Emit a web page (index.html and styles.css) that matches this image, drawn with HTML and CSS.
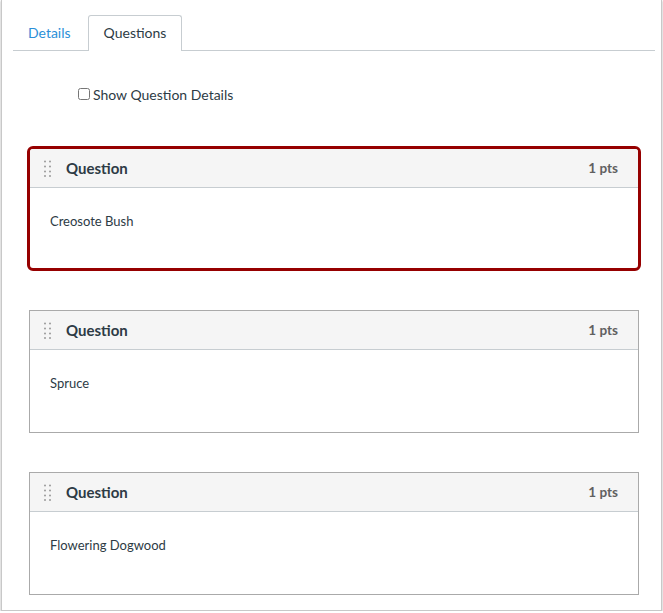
FILE: index.html
```
<!DOCTYPE html>
<html lang="en">
<head>
    <meta charset="UTF-8">
    <meta name="viewport" content="width=device-width, initial-scale=1.0">
    <title>Quiz Questions</title>
    <link rel="stylesheet" href="styles.css">
</head>
<body>
    <div class="frame">
        <div class="tabs">
            <a class="tab" href="#">Details</a>
            <a class="tab active" href="#">Questions</a>
        </div>

        <label class="show-details">
            <input type="checkbox" id="show-details">
            Show Question Details
        </label>

        <div class="questions">
            <div class="question selected">
                <div class="question-header">
                    <svg class="handle" width="8" height="17" viewBox="0 0 8 17">
                        <circle cx="1" cy="1.5" r="1"/><circle cx="6" cy="1.5" r="1"/>
                        <circle cx="1" cy="6.5" r="1"/><circle cx="6" cy="6.5" r="1"/>
                        <circle cx="1" cy="11.5" r="1"/><circle cx="6" cy="11.5" r="1"/>
                        <circle cx="1" cy="16" r="1"/><circle cx="6" cy="16" r="1"/>
                    </svg>
                    <span class="question-title">Question</span>
                    <span class="points">1 pts</span>
                </div>
                <div class="question-body">Creosote Bush</div>
            </div>

            <div class="question">
                <div class="question-header">
                    <svg class="handle" width="8" height="17" viewBox="0 0 8 17">
                        <circle cx="1" cy="1.5" r="1"/><circle cx="6" cy="1.5" r="1"/>
                        <circle cx="1" cy="6.5" r="1"/><circle cx="6" cy="6.5" r="1"/>
                        <circle cx="1" cy="11.5" r="1"/><circle cx="6" cy="11.5" r="1"/>
                        <circle cx="1" cy="16" r="1"/><circle cx="6" cy="16" r="1"/>
                    </svg>
                    <span class="question-title">Question</span>
                    <span class="points">1 pts</span>
                </div>
                <div class="question-body">Spruce</div>
            </div>

            <div class="question">
                <div class="question-header">
                    <svg class="handle" width="8" height="17" viewBox="0 0 8 17">
                        <circle cx="1" cy="1.5" r="1"/><circle cx="6" cy="1.5" r="1"/>
                        <circle cx="1" cy="6.5" r="1"/><circle cx="6" cy="6.5" r="1"/>
                        <circle cx="1" cy="11.5" r="1"/><circle cx="6" cy="11.5" r="1"/>
                        <circle cx="1" cy="16" r="1"/><circle cx="6" cy="16" r="1"/>
                    </svg>
                    <span class="question-title">Question</span>
                    <span class="points">1 pts</span>
                </div>
                <div class="question-body">Flowering Dogwood</div>
            </div>
        </div>
    </div>
</body>
</html>
```

FILE: styles.css
```
body {
    margin: 0;
    font-family: Lato, "Liberation Sans", sans-serif;
    color: #2d3b45;
    background: #fff;
}

.frame {
    margin-left: 1px;
    width: 661px;
    height: 611px;
    box-sizing: border-box;
    border: 1px solid #c8c8c8;
    border-top: none;
    box-shadow: 0 1px 2px rgba(0, 0, 0, 0.35);
    padding-top: 15px;
}

.tabs {
    display: flex;
    height: 35px;
    margin: 0 6px 0 11px;
    border-bottom: 1px solid #c7cdd1;
}

.tab {
    display: flex;
    align-items: center;
    height: 33px;
    padding: 0 16px 2px 14px;
    border: 1px solid transparent;
    border-bottom: none;
    font-size: 14px;
    text-decoration: none;
    color: #2b8fd8;
}

.tab.active {
    box-sizing: border-box;
    height: 36px;
    padding: 0 15px 2px 15px;
    margin-bottom: -1px;
    color: #2d3b45;
    background: #fff;
    border-color: #c7cdd1;
    border-radius: 3px 3px 0 0;
}

.show-details {
    display: flex;
    align-items: center;
    height: 20px;
    margin: 33px 0 0 76px;
    font-size: 14px;
}

.show-details input {
    width: 12px;
    height: 12px;
    margin: 0 3px 0 0;
}

.questions {
    display: flex;
    flex-direction: column;
    gap: 39px;
    width: 610px;
    margin: 42px 0 0 27px;
}

.question {
    border: 1px solid #aaa;
    background: #fff;
}

.question.selected {
    margin: 0 -2px;
    border: 3px solid #960000;
    border-radius: 6px;
    overflow: hidden;
}

.question-header {
    display: flex;
    align-items: center;
    height: 38px;
    padding: 0 20px 0 14px;
    background: #f5f5f5;
    border-bottom: 1px solid #c7cdd1;
}

.handle {
    fill: #9a9a9a;
    margin-right: 14px;
}

.question-title {
    font-size: 15px;
    font-weight: bold;
}

.points {
    margin-left: auto;
    font-size: 13.5px;
    font-weight: bold;
    color: #606060;
}

.question-body {
    height: 82px;
    box-sizing: border-box;
    padding: 24px 20px 0;
    font-size: 13px;
    line-height: 18px;
}

.question.selected .question-body {
    height: 80px;
}
```
